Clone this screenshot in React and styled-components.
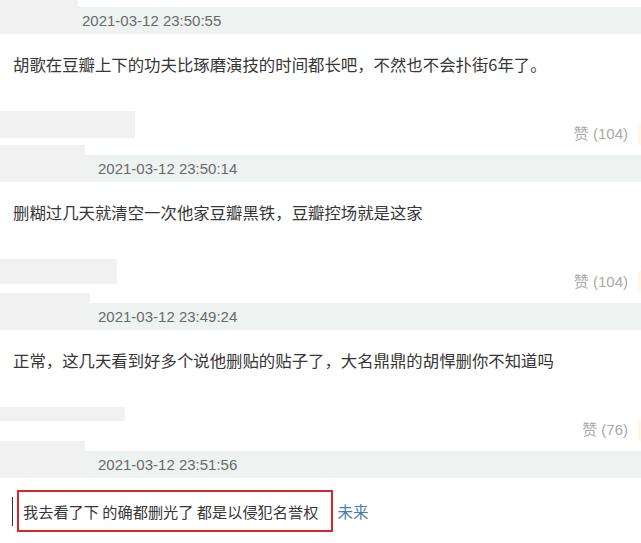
import styled, { createGlobalStyle } from "styled-components";

const Global = createGlobalStyle`
  body {
    margin: 0;
    background: #ffffff;
  }
`;

const Page = styled.div`
  width: 641px;
  overflow: hidden;
  background: #ffffff;
  font-family: "Noto Sans CJK SC", "Liberation Sans", sans-serif;
`;

const Header = styled.div`
  display: flex;
  align-items: flex-end;
  height: ${(p) => p.$h}px;
`;

const Mask = styled.div`
  flex-shrink: 0;
  width: ${(p) => p.$w}px;
  height: ${(p) => p.$h || 37}px;
  background: #f1f1f1;
  align-self: flex-start;
`;

const Bar = styled.div`
  flex: 1;
  height: 27px;
  display: flex;
  align-items: center;
  padding-left: ${(p) => p.$pad}px;
  background: #eef2f1;
  color: #6a6a6a;
  font-family: "Liberation Sans", Arial, sans-serif;
  font-size: 15px;
`;

const Text = styled.p`
  margin: 18px 0 0;
  padding-left: 13px;
  font-size: 16.4px;
  line-height: 24px;
  color: #363636;
  white-space: nowrap;
`;

const Footer = styled.div`
  display: flex;
  align-items: flex-end;
  height: 34px;
  margin-top: 35px;
`;

const Votes = styled.span`
  margin-left: auto;
  margin-bottom: 1px;
  line-height: 20px;
  font-size: 15px;
  color: #a9a9a9;
  font-family: "Liberation Sans", "Noto Sans CJK SC", sans-serif;
`;

const Stripe = styled.span`
  width: 3px;
  height: 22px;
  margin-left: 10px;
  background: #fef9e4;
`;

const QuoteRow = styled.div`
  display: flex;
  align-items: center;
  margin-top: 12px;
  padding-left: 12px;
`;

const Cursor = styled.span`
  width: 1px;
  height: 29px;
  background: #333;
`;

const Marked = styled.span`
  margin-left: 4px;
  height: 42px;
  box-sizing: border-box;
  display: flex;
  align-items: center;
  padding: 0 13px 0 4px;
  border: 2px solid #d7252c;
  font-size: 15.2px;
  color: #363636;
  white-space: pre;
`;

const Link = styled.span`
  margin-left: 4px;
  font-size: 15.5px;
  color: #4a7cb0;
`;

const comments = [
  {
    date: "2021-03-12 23:50:55",
    head: 34,
    maskW: 78,
    dateX: 82,
    text: "胡歌在豆瓣上下的功夫比琢磨演技的时间都长吧，不然也不会扑街6年了。",
    footMask: { w: 135, h: 27 },
    votes: 104,
  },
  {
    date: "2021-03-12 23:50:14",
    head: 37,
    maskW: 85,
    dateX: 98,
    text: "删糊过几天就清空一次他家豆瓣黑铁，豆瓣控场就是这家",
    footMask: { w: 117, h: 25 },
    votes: 104,
  },
  {
    date: "2021-03-12 23:49:24",
    head: 37,
    maskW: 90,
    dateX: 98,
    text: "正常，这几天看到好多个说他删贴的贴子了，大名鼎鼎的胡悍删你不知道吗",
    footMask: { w: 125, h: 14 },
    votes: 76,
  },
];

const Comment = ({ c }) => (
  <div>
    <Header $h={c.head}>
      <Mask $w={c.maskW} $h={c.head} />
      <Bar $pad={c.dateX - c.maskW}>{c.date}</Bar>
    </Header>
    <Text>{c.text}</Text>
    <Footer>
      <Mask $w={c.footMask.w} $h={c.footMask.h} />
      <Votes>赞 ({c.votes})</Votes>
      <Stripe />
    </Footer>
  </div>
);

export default function App() {
  return (
    <Page>
      <Global />
      {comments.map((c) => (
        <Comment key={c.date} c={c} />
      ))}
      <Header $h={37}>
        <Mask $w={85} />
        <Bar $pad={13}>2021-03-12 23:51:56</Bar>
      </Header>
      <QuoteRow>
        <Cursor />
        <Marked>我去看了下 的确都删光了 都是以侵犯名誉权</Marked>
        <Link>未来</Link>
      </QuoteRow>
    </Page>
  );
}
